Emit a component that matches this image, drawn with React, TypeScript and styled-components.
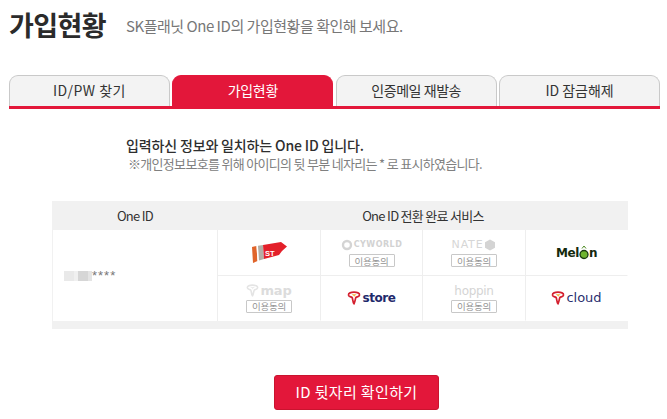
import React from 'react';
import styled, { createGlobalStyle } from 'styled-components';

const GlobalStyle = createGlobalStyle`
  html, body {
    margin: 0;
    padding: 0;
    background: #fff;
    font-family: "Noto Sans CJK KR", "Liberation Sans", sans-serif;
  }
`;

const Page = styled('div')`
  width: 667px;
  height: 419px;
  overflow: hidden;
  padding: 5px 7px 0 9px;
  box-sizing: border-box;
`;

const Header = styled('div')`
  display: flex;
  align-items: center;
  height: 38px;
`;

const Title = styled('h1')`
  margin: 0;
  font-size: 27px;
  font-weight: 700;
  letter-spacing: -0.6px;
  color: #2b2b2b;
`;

const Subtitle = styled('p')`
  margin: 0 0 0 20px;
  padding-top: 2px;
  font-size: 15px;
  letter-spacing: -0.47px;
  color: #777;
`;

const Tabs = styled('div')`
  display: flex;
  gap: 2.5px;
  margin-top: 32px;
  border-bottom: 3px solid #e3173a;
`;

const Tab = styled('div')<{ $active?: boolean; $track?: number }>`
  width: 161px;
  height: 31px;
  box-sizing: border-box;
  display: flex;
  align-items: center;
  justify-content: center;
  border-radius: 9px 9px 0 0;
  border: 1px solid ${(p) => (p.$active ? '#e3173a' : '#c9c9c9')};
  border-bottom: none;
  background: ${(p) => (p.$active ? '#e3173a' : '#f3f3f3')};
  color: ${(p) => (p.$active ? '#fff' : '#333')};
  font-size: 14px;
  letter-spacing: ${(p) => p.$track ?? -0.3}px;
  padding-bottom: 2px;
`;

const Notice = styled('div')`
  margin: 26px 0 0 117px;
`;

const NoticeTitle = styled('p')`
  margin: 0;
  height: 20px;
  line-height: 20px;
  font-size: 14px;
  font-weight: 500;
  letter-spacing: -0.15px;
  color: #2e2e2e;
`;

const NoticeSub = styled('p')`
  margin: 0 0 0 2px;
  height: 18px;
  line-height: 18px;
  font-size: 13px;
  letter-spacing: -0.69px;
  color: #808080;
`;

const Table = styled('div')`
  margin: 28px 0 0 43px;
  width: 576px;
  display: grid;
  grid-template-columns: 166px 103px 102px 103px 102px;
  grid-template-rows: 29px 46px 45px 8px;
  background: #f1f1f1;
`;

const HeadCell = styled('div')<{ $span?: number }>`
  grid-column: span ${(p) => p.$span ?? 1};
  display: flex;
  align-items: center;
  justify-content: center;
  font-size: 13px;
  letter-spacing: -0.7px;
  color: #333;
`;

const IdCell = styled('div')`
  grid-row: span 2;
  display: flex;
  align-items: center;
  padding-left: 11px;
  background: #fff;
  border-left: 1px solid #f1f1f1;
  border-right: 1px solid #eeeeee;
`;

const BlurBlock = styled('span')`
  width: 28px;
  height: 10px;
  background: linear-gradient(90deg, #e9e9e9 0 35%, #f0f0f0 35% 50%, #d6d6d6 50% 85%, #e4e4e4 85%);
`;

const Mask = styled('span')`
  font-size: 13px;
  line-height: 10px;
  letter-spacing: 1px;
  color: #777;
  font-family: "Liberation Sans", sans-serif;
`;

const Cell = styled('div')<{ $last?: boolean; $bottom?: boolean }>`
  display: flex;
  flex-direction: column;
  align-items: center;
  justify-content: center;
  gap: 2px;
  background: #fff;
  border-right: 1px solid ${(p) => (p.$last ? '#fff' : '#eeeeee')};
  border-bottom: 1px solid ${(p) => (p.$bottom ? '#fff' : '#eeeeee')};
`;

const Foot = styled('div')`
  grid-column: 1 / -1;
`;

const Consent = styled('span')`
  width: 46px;
  height: 13px;
  box-sizing: border-box;
  display: flex;
  align-items: center;
  justify-content: center;
  border: 1px solid #c8c8c8;
  border-radius: 1px;
  font-size: 9.5px;
  letter-spacing: -0.3px;
  color: #949494;
`;

const Logo = styled('span')<{ $color: string; $size?: number; $weight?: number; $track?: number; $gap?: number }>`
  display: inline-flex;
  align-items: center;
  gap: ${(p) => p.$gap ?? 1}px;
  font-family: "DejaVu Sans", sans-serif;
  font-size: ${(p) => p.$size ?? 12}px;
  font-weight: ${(p) => p.$weight ?? 700};
  line-height: 14px;
  letter-spacing: ${(p) => p.$track ?? -0.2}px;
  color: ${(p) => p.$color};
`;

const ButtonRow = styled('div')`
  display: flex;
  margin: 46px 0 0 265px;
`;

const Button = styled('button')`
  width: 165px;
  height: 35px;
  border: 1px solid #c9142f;
  border-radius: 3px;
  background: #e3173a;
  color: #fff;
  font-family: inherit;
  font-size: 15px;
  letter-spacing: 0.35px;
  padding: 0 0 2px;
`;

// T-shaped mark used by the T map, T store and T cloud logos
const TMark = ({ size = 14, color = '#d4202f', stem = '#f2b33a' }: { size?: number; color?: string; stem?: string }) => (
  <svg width={size} height={size} viewBox="0 0 14 14">
    <path
      d="M1.5 4.2C1.2 2 4 1.2 7 1.2S12.9 2 12.5 4.2C12.2 6 9.8 5.6 9 6.4 8.2 7.4 8.4 10 7 12.8 5.4 10.4 6 7.6 5 6.4 4.2 5.6 1.8 6 1.5 4.2Z"
      fill="#fff"
      stroke={color}
      strokeWidth="1.7"
      strokeLinejoin="round"
    />
    <path d="M4.6 3.6C6 3 8 3 9.6 3.6 8.4 4.2 7.6 4.6 7.2 6 6.8 4.6 6 4.2 4.6 3.6Z" fill={stem} />
  </svg>
);

const ElevenLogo = () => (
  <svg width="37" height="23" viewBox="0 0 37 23">
    <path d="M1 6 L5.5 5 L6.5 20 L2 22Z" fill="#e0642a" />
    <path d="M5.5 5 L7 4.8 L8 19.6 L6.5 20Z" fill="#fff" />
    <path d="M7 4.8 L12 4 L13 18 L8 19.6Z" fill="#b3aea6" />
    <path d="M12 4 L30 1 L36 5.5 L31 10 L28 14 L13 18Z" fill="#e3202a" />
    <text x="14" y="15" fontSize="7.5" fontWeight="700" fill="#fff" fontFamily="Liberation Sans, sans-serif">ST</text>
  </svg>
);

const CyLogo = () => (
  <Logo $color="#d2d2d2" $size={8} $track={0.5}>
    <svg width="12" height="12" viewBox="0 0 12 12">
      <circle cx="6" cy="6" r="4" fill="none" stroke="#d4d4d4" strokeWidth="2.4" />
    </svg>
    CYWORLD
  </Logo>
);

const NateLogo = () => (
  <Logo $color="#d6d6d6" $size={11} $weight={400} $track={0.8}>
    NATE
    <svg width="12" height="12" viewBox="0 0 12 12">
      <path d="M6 0.5 11 3.2V8.8L6 11.5 1 8.8V3.2Z" fill="#d4d4d4" />
    </svg>
  </Logo>
);

const MelonLogo = () => (
  <Logo $color="#14290c" $size={12} $track={-0.4} $gap={0}>
    Mel
    <svg width="10" height="15" viewBox="0.5 0 10 15">
      <circle cx="5.5" cy="9.5" r="4" fill="#6fb52f" stroke="#1c3b12" strokeWidth="1.3" />
      <path d="M3.5 3.5 5.5 1 7.5 3.5" fill="none" stroke="#4d8a22" strokeWidth="1" />
    </svg>
    n
  </Logo>
);

const App = () => (
  <>
    <GlobalStyle />
    <Page>
      <Header>
        <Title>가입현황</Title>
        <Subtitle>SK플래닛 One ID의 가입현황을 확인해 보세요.</Subtitle>
      </Header>
      <Tabs>
        <Tab $track={0.5}>ID/PW 찾기</Tab>
        <Tab $active>가입현황</Tab>
        <Tab $track={-0.45}>인증메일 재발송</Tab>
        <Tab $track={-0.05}>ID 잠금해제</Tab>
      </Tabs>
      <Notice>
        <NoticeTitle>입력하신 정보와 일치하는 One ID 입니다.</NoticeTitle>
        <NoticeSub>※개인정보보호를 위해 아이디의 뒷 부분 네자리는 * 로 표시하였습니다.</NoticeSub>
      </Notice>
      <Table>
        <HeadCell>One ID</HeadCell>
        <HeadCell $span={4}>One ID 전환 완료 서비스</HeadCell>
        <IdCell>
          <BlurBlock />
          <Mask>****</Mask>
        </IdCell>
        <Cell><ElevenLogo /></Cell>
        <Cell><CyLogo /><Consent>이용동의</Consent></Cell>
        <Cell><NateLogo /><Consent>이용동의</Consent></Cell>
        <Cell $last><MelonLogo /></Cell>
        <Cell $bottom>
          <Logo $color="#dcdcdc" $size={13}><TMark size={13} color="#e4e4e4" stem="#ececec" />map</Logo>
          <Consent>이용동의</Consent>
        </Cell>
        <Cell $bottom><Logo $color="#1f2a6b" $size={12} $track={-0.4}><TMark />store</Logo></Cell>
        <Cell $bottom><Logo $color="#d4d4d4" $size={12} $weight={400} $track={-0.3}>hoppin</Logo><Consent>이용동의</Consent></Cell>
        <Cell $last $bottom><Logo $color="#2a2f70" $size={13} $weight={400} $track={0}><TMark />cloud</Logo></Cell>
        <Foot />
      </Table>
      <ButtonRow>
        <Button>ID 뒷자리 확인하기</Button>
      </ButtonRow>
    </Page>
  </>
);

export default App;
